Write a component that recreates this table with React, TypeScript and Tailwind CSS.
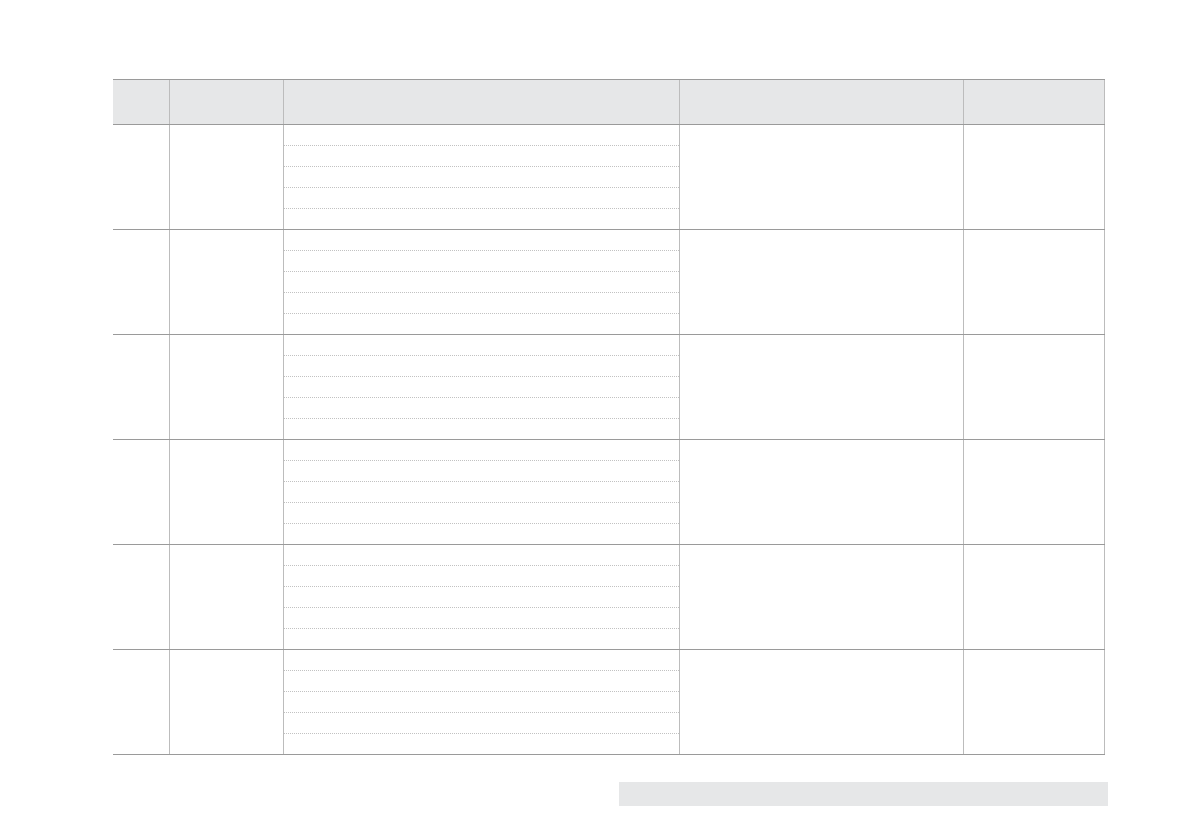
const rows = [0, 1, 2, 3, 4, 5];

function Lines() {
  return (
    <div className="flex flex-col">
      {[0, 1, 2, 3].map((i) => (
        <div key={i} className="h-[21px] border-b border-dotted border-[#c2c2c2]" />
      ))}
    </div>
  );
}

export default function App() {
  return (
    <div className="min-h-[839px] bg-white pt-[79px] pl-[113px] font-['Liberation_Sans',sans-serif]">
      <div className="w-[992px]">
        {/* header */}
        <div className="grid grid-cols-[56px_114px_396px_284px_142px] h-[46px] border-t border-b border-[#9a9a9a] bg-[#e6e7e8]">
          <div />
          <div className="border-l border-[#bcbcbc]" />
          <div className="border-l border-[#bcbcbc]" />
          <div className="border-l border-[#bcbcbc]" />
          <div className="border-l border-r border-[#bcbcbc]" />
        </div>
        {rows.map((r) => (
          <div
            key={r}
            className="grid grid-cols-[56px_114px_396px_284px_142px] h-[105px] border-b border-[#9a9a9a]"
          >
            <div />
            <div className="border-l border-[#bcbcbc]" />
            <div className="border-l border-[#bcbcbc]">
              <Lines />
            </div>
            <div className="border-l border-[#bcbcbc]" />
            <div className="border-l border-r border-[#bcbcbc]" />
          </div>
        ))}
      </div>
      <div className="mt-[27px] ml-[506px] w-[489px] h-[24px] bg-[#e6e7e8]" />
    </div>
  );
}
